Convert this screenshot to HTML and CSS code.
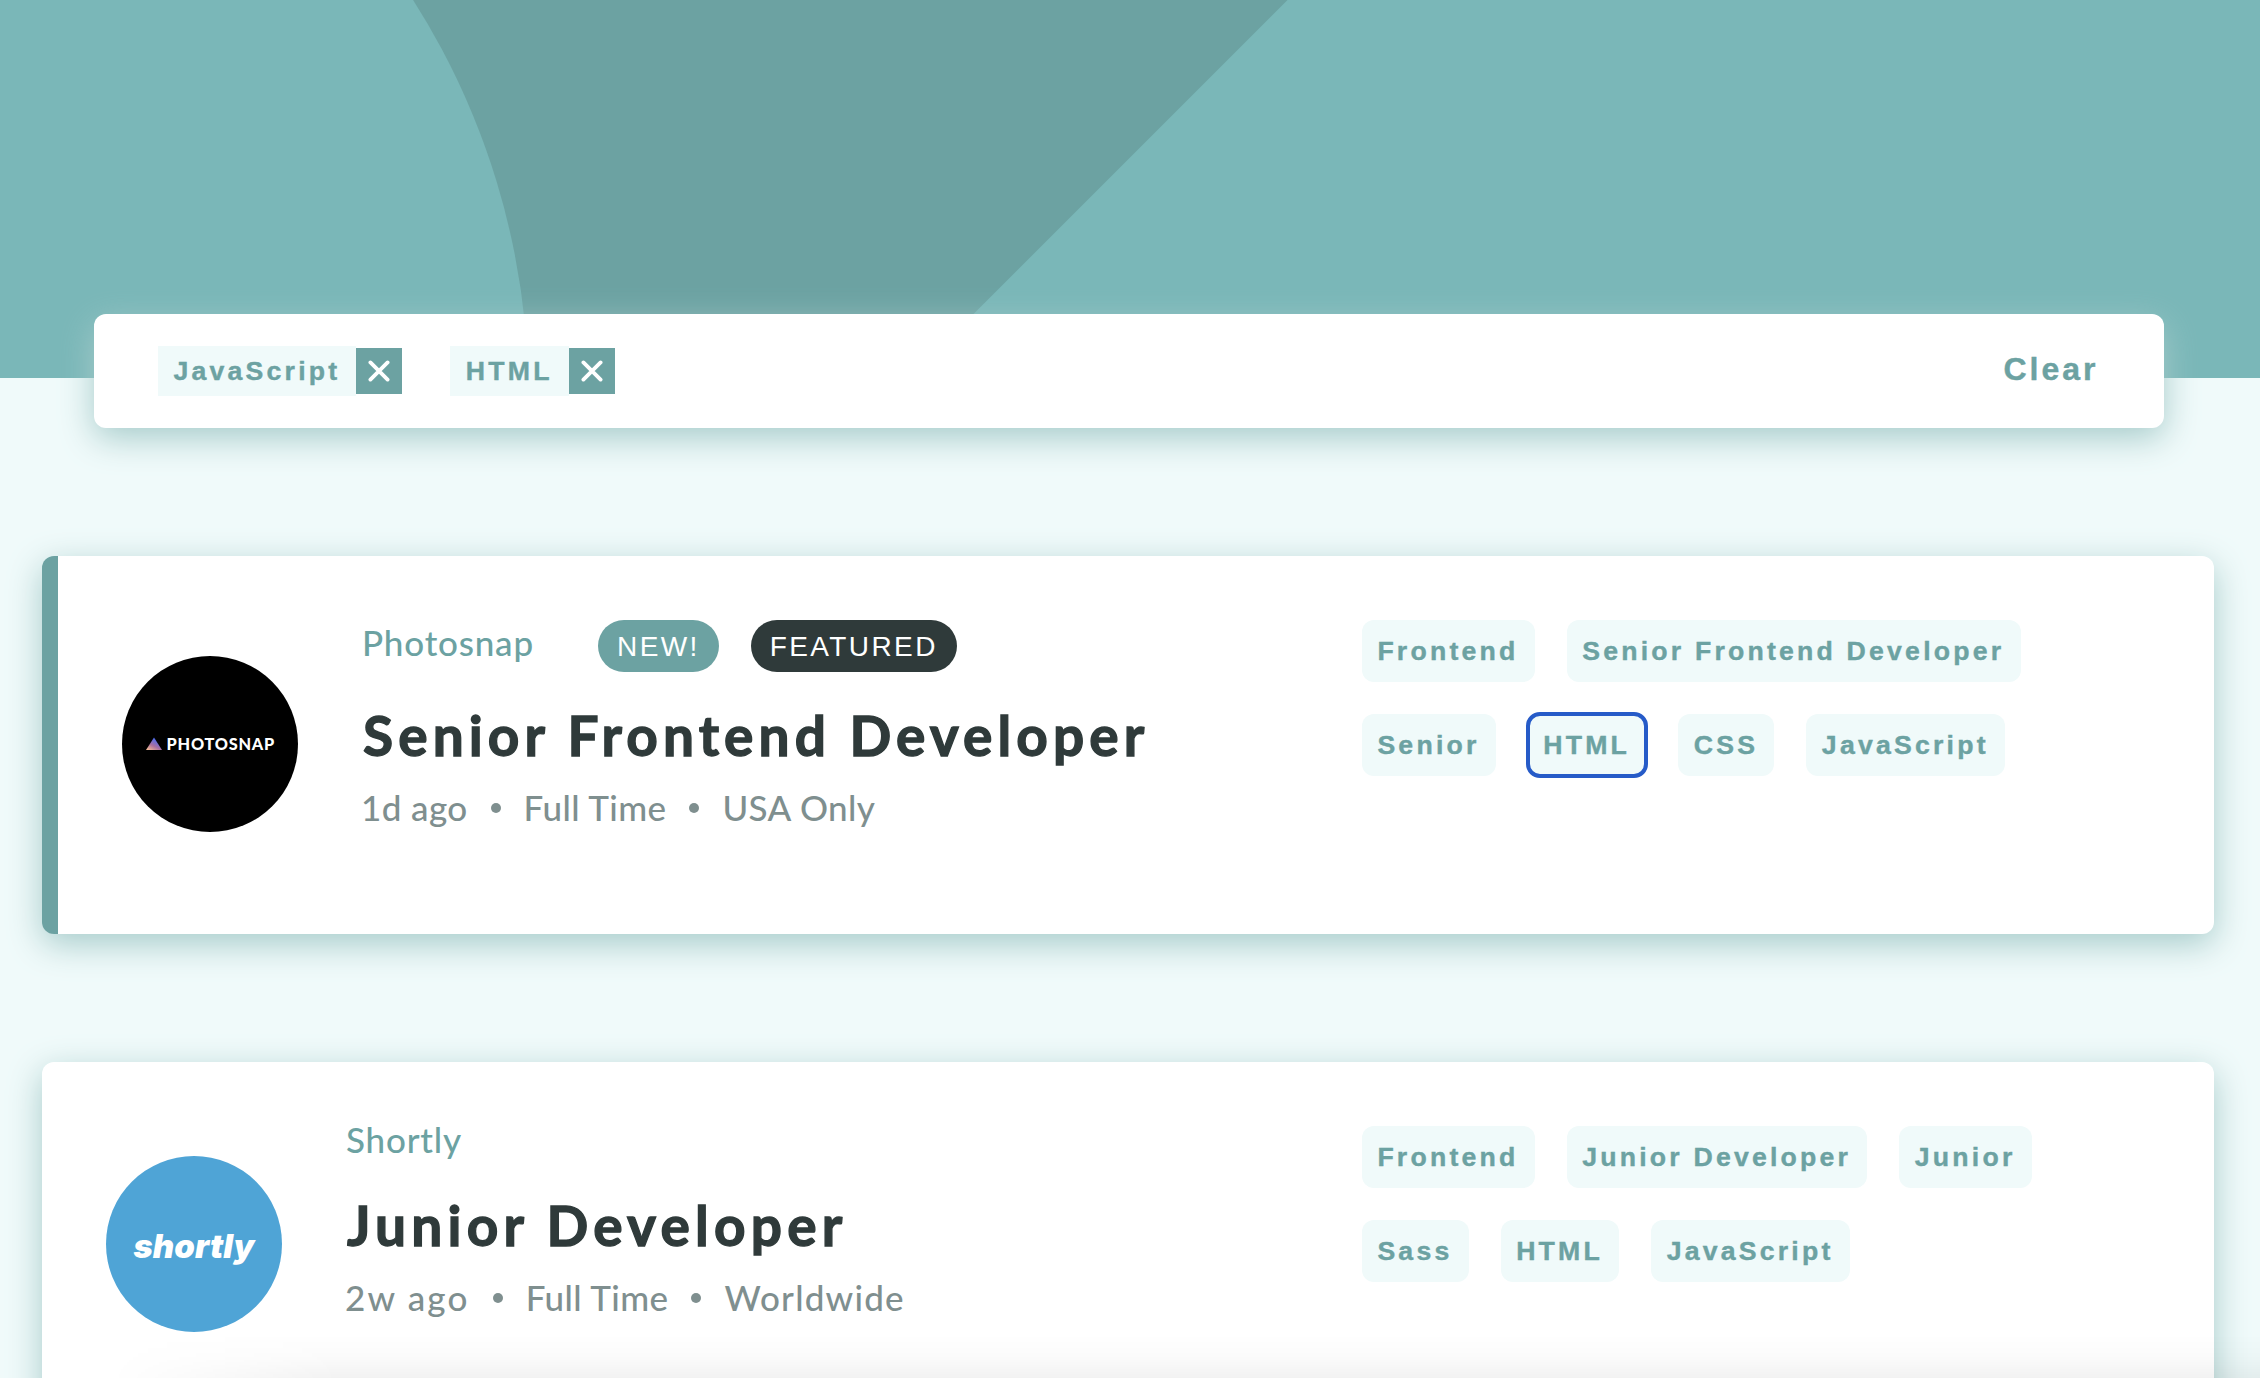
FILE: index.html
```html
<!DOCTYPE html>
<html lang="en">
<head>
  <meta charset="utf-8">
  <title>Job listings</title>
  <link rel="stylesheet" href="styles.css">
</head>
<body>
  <header class="hero">
    <svg class="hero-pattern" width="2260" height="378" viewBox="0 0 2260 378" aria-hidden="true">
      <path d="M0 0H1287.5L909.5 378H0Z" fill="#6ca2a2"/>
      <circle cx="-208.5" cy="396" r="737" fill="#7ab7b8"/>
    </svg>
  </header>

  <section class="filter-bar">
    <div class="filters">
      <div class="filter">
        <span class="filter-name">JavaScript</span>
        <button class="filter-remove" aria-label="Remove">
          <svg width="22" height="22" viewBox="0 0 22 22"><path d="M2.4 2.4L19.6 19.6M19.6 2.4L2.4 19.6" stroke="#fff" stroke-width="3.8" stroke-linecap="round"/></svg>
        </button>
      </div>
      <div class="filter">
        <span class="filter-name">HTML</span>
        <button class="filter-remove" aria-label="Remove">
          <svg width="22" height="22" viewBox="0 0 22 22"><path d="M2.4 2.4L19.6 19.6M19.6 2.4L2.4 19.6" stroke="#fff" stroke-width="3.8" stroke-linecap="round"/></svg>
        </button>
      </div>
    </div>
    <button class="clear">Clear</button>
  </section>

  <main class="jobs">
    <article class="job job-featured">
      <svg class="logo" width="176" height="176" viewBox="0 0 176 176">
        <defs>
          <linearGradient id="snap" x1="0" y1="1" x2="0.6" y2="0.1">
            <stop offset="0" stop-color="#ffc593"/>
            <stop offset="0.5" stop-color="#a86f9f"/>
            <stop offset="1" stop-color="#4a6df5"/>
          </linearGradient>
        </defs>
        <circle cx="88" cy="88" r="88" fill="#000"/>
        <path d="M24 94L32 81.5L40 94Z" fill="url(#snap)"/>
        <text class="logo-photosnap" x="44.6" y="94" textLength="107.5">PHOTOSNAP</text>
      </svg>
      <div class="details">
        <div class="company-row">
          <span class="company">Photosnap</span>
          <span class="badge badge-new">NEW!</span>
          <span class="badge badge-featured">FEATURED</span>
        </div>
        <h2 class="position">Senior Frontend Developer</h2>
        <ul class="meta">
          <li>1d ago</li>
          <li>Full Time</li>
          <li>USA Only</li>
        </ul>
      </div>
      <div class="tags">
        <button class="tag">Frontend</button>
        <button class="tag">Senior Frontend Developer</button>
        <button class="tag">Senior</button>
        <button class="tag tag-focus">HTML</button>
        <button class="tag">CSS</button>
        <button class="tag">JavaScript</button>
      </div>
    </article>

    <article class="job job-plain">
      <svg class="logo" width="176" height="176" viewBox="0 0 176 176">
        <circle cx="88" cy="88" r="88" fill="#4fa4d6"/>
        <text class="logo-shortly" x="27.5" y="101.5" textLength="121" lengthAdjust="spacingAndGlyphs">shortly</text>
      </svg>
      <div class="details">
        <div class="company-row">
          <span class="company">Shortly</span>
        </div>
        <h2 class="position">Junior Developer</h2>
        <ul class="meta">
          <li class="loose">2w ago</li>
          <li>Full Time</li>
          <li class="wide">Worldwide</li>
        </ul>
      </div>
      <div class="tags">
        <button class="tag">Frontend</button>
        <button class="tag">Junior Developer</button>
        <button class="tag">Junior</button>
        <button class="tag">Sass</button>
        <button class="tag">HTML</button>
        <button class="tag">JavaScript</button>
      </div>
    </article>
  </main>
</body>
</html>
```
FILE: styles.css
```css
:root {
  --teal: #6ca2a2;
  --teal-light: #7ab7b8;
  --mist: #f0fafa;
  --ink: #2f3a3a;
  --gray: #7f8f8f;
  --shadow: 0 10px 34px rgb(166, 203, 202);
}

* {
  box-sizing: border-box;
}

body {
  margin: 0;
  height: 1378px;
  overflow: hidden;
  position: relative;
  background: var(--mist);
  font-family: Lato, "Liberation Sans", sans-serif;
}

/* soft dark fade along the bottom edge of the viewport */
body::after {
  content: "";
  position: absolute;
  left: 0;
  right: 0;
  bottom: 0;
  height: 44px;
  background: linear-gradient(to bottom, rgba(0, 0, 0, 0), rgba(0, 0, 0, 0.017) 50%, rgba(0, 0, 0, 0.05));
  mask-image: linear-gradient(to right, transparent 110px, #000 340px);
  pointer-events: none;
}

button {
  border: 0;
  padding: 0;
  background: none;
  color: var(--teal);
  font: bold 26.67px "Liberation Sans", sans-serif;
  letter-spacing: 3.2px;
  -webkit-text-stroke: 0.4px;
}

.hero {
  height: 378px;
  background: var(--teal-light);
  overflow: hidden;
}

.hero-pattern {
  display: block;
}

.filter-bar {
  position: relative;
  display: flex;
  align-items: center;
  justify-content: space-between;
  height: 114px;
  margin: -64px 96px 0 94px;
  padding: 0 64px;
  border-radius: 12px;
  background: #fff;
  box-shadow: var(--shadow);
}

.filters {
  display: flex;
  gap: 48px;
}

.filter {
  display: flex;
  align-items: center;
}

.filter-name {
  padding: 0 16px 0 15.5px;
  background: var(--mist);
  color: var(--teal);
  font: bold 26.67px/50px "Liberation Sans", sans-serif;
  letter-spacing: 3.2px;
  -webkit-text-stroke: 0.4px;
}

.filter-remove {
  display: flex;
  align-items: center;
  justify-content: center;
  width: 46px;
  height: 46px;
  background: var(--teal);
}

.clear {
  padding: 0 1.5px 4px 0;
  font-size: 32px;
  letter-spacing: 3px;
}

.jobs {
  display: flex;
  flex-direction: column;
  gap: 128px;
  padding: 128px 46px 0 42px;
}

.job {
  display: flex;
  gap: 64px;
  height: 378px;
  padding: 64px;
  border-radius: 12px;
  background: #fff;
  box-shadow: var(--shadow);
}

.job-featured {
  border-left: 16px solid var(--teal);
}

.logo {
  flex: none;
  margin-top: 36px;
}

.job-plain .logo {
  margin-top: 30px;
}

.logo-photosnap {
  fill: #fff;
  font: 900 16.3px Lato, sans-serif;
}

.logo-shortly {
  fill: #fff;
  font: italic 900 33px Inter, sans-serif;
}

.company-row {
  display: flex;
  height: 52px;
}

.company {
  margin-right: 64px;
  color: var(--teal);
  font-size: 35px;
  font-weight: 500;
  line-height: 44px;
  letter-spacing: 0.8px;
}

.badge {
  height: 52px;
  margin-right: 32px;
  padding: 0 18.8px 0 19.2px;
  border-radius: 26px;
  color: #fff;
  font: 28px/53px "Liberation Sans", sans-serif;
  letter-spacing: 2.4px;
}

.badge-new {
  background: var(--teal);
}

.badge-featured {
  background: var(--ink);
}

.position {
  margin: 30px 0 18px;
  color: var(--ink);
  font-size: 55px;
  font-weight: 700;
  line-height: 66px;
  letter-spacing: 5.1px;
  text-indent: 1px;
  white-space: nowrap;
  -webkit-text-stroke: 1.3px;
}

.meta {
  display: flex;
  margin: 0 0 0 -1px;
  padding: 0;
  list-style: none;
  color: var(--gray);
  font-size: 35px;
  font-weight: 500;
  line-height: 42px;
  letter-spacing: 0.4px;
  white-space: nowrap;
}

.meta li {
  display: flex;
  align-items: center;
}

.meta li + li::before {
  content: "";
  width: 10px;
  height: 10px;
  margin: 2px 23px 0;
  border-radius: 50%;
  background: currentColor;
}

.meta .loose {
  letter-spacing: 2.2px;
}

.meta .wide {
  letter-spacing: 1.2px;
}

.job-plain .company-row {
  height: 42px;
  margin-top: -9px;
}

.job-plain .position {
  margin-top: 33px;
  letter-spacing: 5.2px;
}

.tags {
  display: flex;
  flex: none;
  flex-wrap: wrap;
  align-content: flex-start;
  gap: 32px;
  width: 788px;
  margin-left: auto;
}

.tag {
  height: 62px;
  padding: 0 16.3px 0 15.4px;
  border-radius: 12px;
  background: var(--mist);
}

.tag-focus {
  outline: 4px solid #265bc8;
  outline-offset: -2px;
}
```
